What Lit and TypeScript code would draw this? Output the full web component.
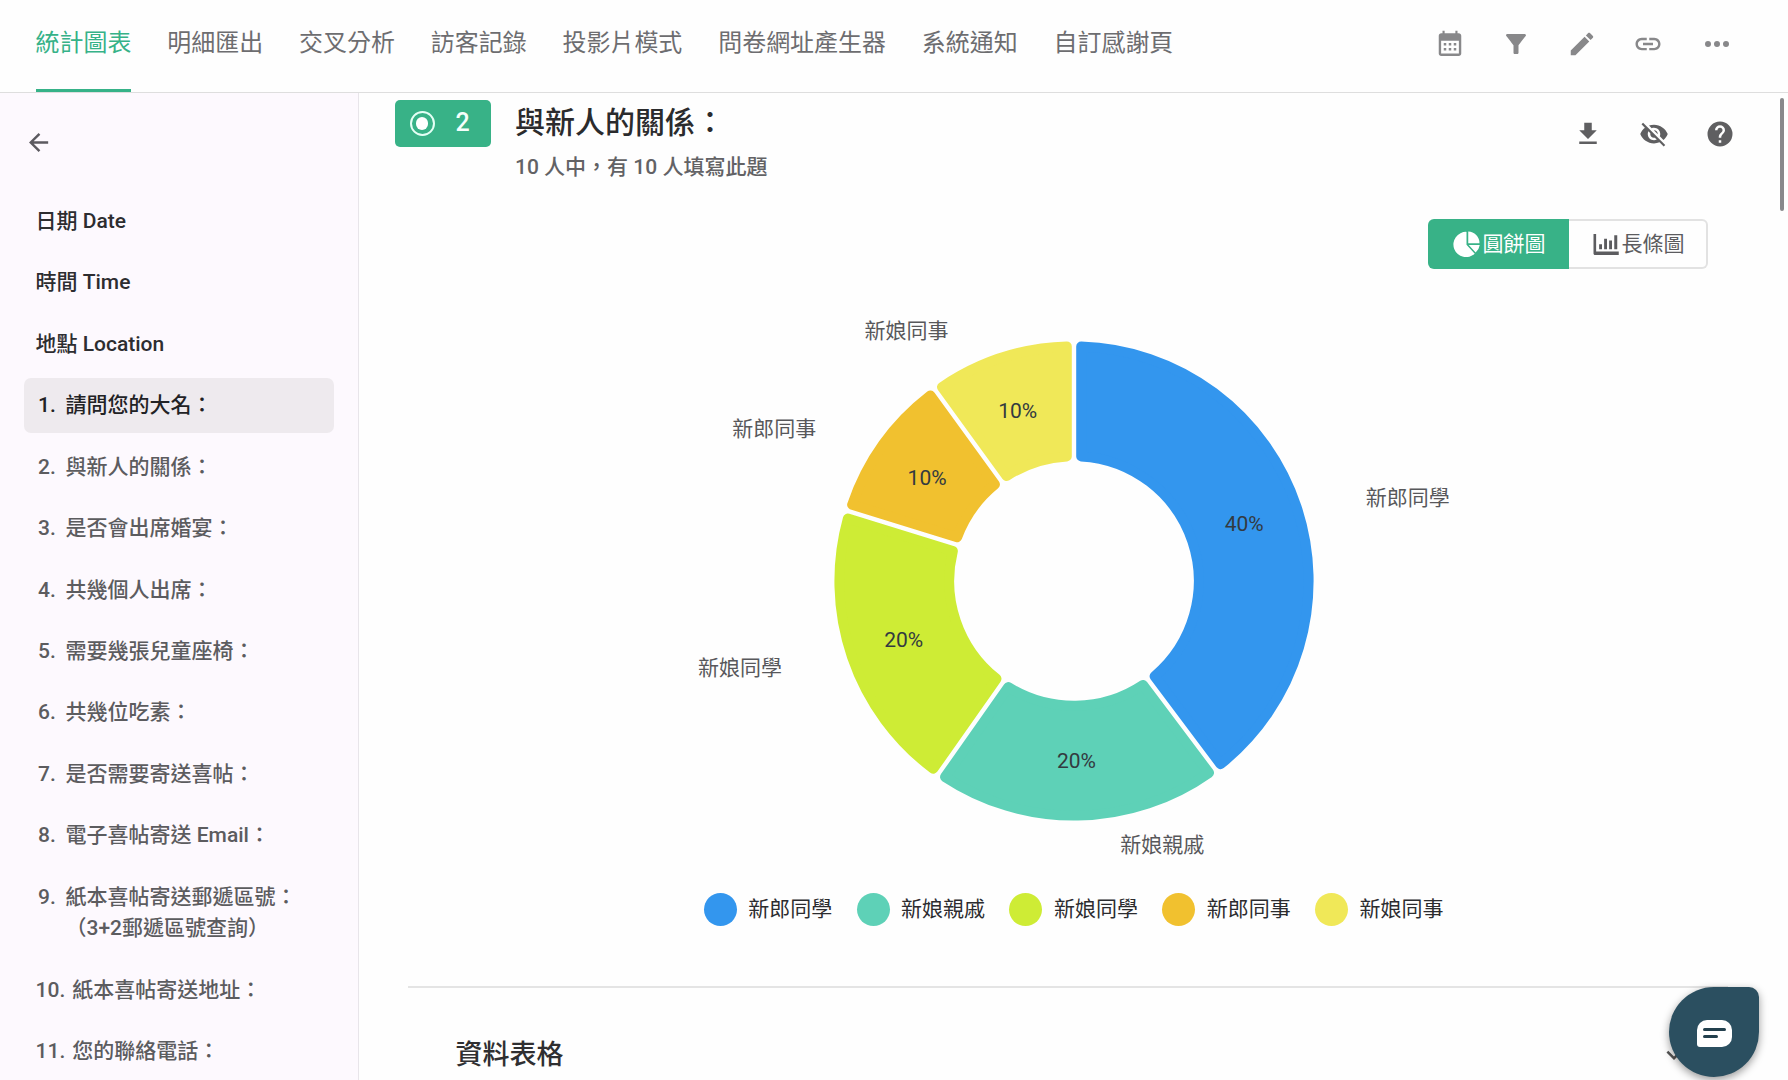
import { LitElement, html, css, svg } from "lit";
import { customElement, property } from "lit/decorators.js";
import { classMap } from "lit/directives/class-map.js";

const ICONS: Record<string, string> = {
  calendar:
    "M19 3.3h-1V1.4h-1.7v1.9H7.7V1.4H6v1.9H5c-1.1 0-2 .9-2 2v14.2c0 1.1.9 2 2 2h14c1.1 0 2-.9 2-2V5.3c0-1.1-.9-2-2-2zM19.1 19.6H4.9V9.4h14.2v10.2zM7 11.2h2v2H7zM11 11.2h2v2h-2zM15 11.2h2v2h-2zM7 15.2h2v2H7zM11 15.2h2v2h-2zM15 15.2h2v2h-2z",
  filter:
    "M4.25 5.61C6.27 8.2 10 13 10 13v6c0 .55.45 1 1 1h2c.55 0 1-.45 1-1v-6s3.72-4.8 5.74-7.39A.998.998 0 0 0 18.95 4H5.04c-.83 0-1.3.95-.79 1.61z",
  pencil:
    "M20.71 7.04c.39-.39.39-1.04 0-1.41l-2.34-2.34c-.37-.39-1.02-.39-1.41 0l-1.84 1.83 3.75 3.75M3 17.25V21h3.75L17.81 9.93l-3.75-3.75L3 17.25z",
  link:
    "M3.9 12c0-1.71 1.39-3.1 3.1-3.1h4V7H7c-2.76 0-5 2.24-5 5s2.24 5 5 5h4v-1.9H7c-1.71 0-3.1-1.39-3.1-3.1zM8 13h8v-2H8v2zm9-6h-4v1.9h4c1.71 0 3.1 1.39 3.1 3.1s-1.39 3.1-3.1 3.1h-4V17h4c2.76 0 5-2.24 5-5s-2.24-5-5-5z",
  dots:
    "M4.8 9.6a2.4 2.4 0 1 0 0 4.8 2.4 2.4 0 0 0 0-4.8zM12 9.6a2.4 2.4 0 1 0 0 4.8 2.4 2.4 0 0 0 0-4.8zM19.2 9.6a2.4 2.4 0 1 0 0 4.8 2.4 2.4 0 0 0 0-4.8z",
  back: "M20 11v2H8l5.5 5.5-1.42 1.42L4.16 12l7.92-7.92L13.5 5.5 8 11h12z",
  download: "M5 20h14v-2H5v2zM19 9h-4V3H9v6H5l7 7 7-7z",
  eyeOff:
    "M12 7c2.76 0 5 2.24 5 5 0 .65-.13 1.26-.36 1.83l2.92 2.92c1.51-1.26 2.7-2.89 3.43-4.75-1.73-4.39-6-7.5-11-7.5-1.4 0-2.74.25-3.98.7l2.16 2.16C10.74 7.13 11.35 7 12 7zM2 4.27l2.28 2.28.46.46C3.08 8.3 1.78 10.02 1 12c1.73 4.39 6 7.5 11 7.5 1.55 0 3.03-.3 4.38-.84l.42.42L19.73 22 21 20.73 3.27 3 2 4.27zM7.53 9.8l1.55 1.55c-.05.21-.08.43-.08.65 0 1.66 1.34 3 3 3 .22 0 .44-.03.65-.08l1.55 1.55c-.67.33-1.41.53-2.2.53-2.76 0-5-2.24-5-5 0-.79.2-1.53.53-2.2zm4.31-.78l3.15 3.15.02-.16c0-1.66-1.34-3-3-3l-.17.01z",
  help:
    "M15.07 11.25l-.9.92C13.45 12.89 13 13.5 13 15h-2v-.5c0-1.11.45-2.11 1.17-2.83l1.24-1.26c.37-.36.59-.86.59-1.41a2 2 0 0 0-4 0H8a4 4 0 0 1 8 0c0 .88-.36 1.67-.93 2.25M13 19h-2v-2h2M12 2a10 10 0 1 0 0 20 10 10 0 0 0 0-20z",
  chevron: "M7.41 8.58L12 13.17l4.59-4.59L18 10l-6 6-6-6 1.41-1.42z",
  pie: "M11.6 2.3V12.6l6.6 7.1A10.1 10.1 0 1 1 11.6 2.3zM13 2v9.3h9A9.4 9.4 0 0 0 13 2zM13.4 12.8H22.2a9.3 9.3 0 0 1-3.3 5.9L13.4 12.8z",
  bars:
    "M2 4h2.1v14h18.1v2.7H3.2c-.7 0-1.2-.5-1.2-1.2V4zM6.5 12.2h2.3v4H6.5zM10.5 7.7h2.3v8.5h-2.3zM14.5 9.2h2.3v7h-2.3zM18.6 5h2.4v11.2h-2.4z",
};

const TABS = ["統計圖表", "明細匯出", "交叉分析", "訪客記錄", "投影片模式", "問卷網址產生器", "系統通知", "自訂感謝頁"];

const HEADINGS = ["日期 Date", "時間 Time", "地點 Location"];

const QUESTIONS: string[][] = [
  ["請問您的大名："],
  ["與新人的關係："],
  ["是否會出席婚宴："],
  ["共幾個人出席："],
  ["需要幾張兒童座椅："],
  ["共幾位吃素："],
  ["是否需要寄送喜帖："],
  ["電子喜帖寄送 Email："],
  ["紙本喜帖寄送郵遞區號：", "（3+2郵遞區號查詢）"],
  ["紙本喜帖寄送地址："],
  ["您的聯絡電話："],
];

interface Slice {
  name: string;
  share: number;
  color: string;
  /** Angle in degrees, clockwise from the top, at which the slice ends. */
  end: number;
  /** Centre of the share text, relative to the ring's centre. */
  inner: [number, number];
  /** Centre of the name, relative to the ring's centre. */
  outer: [number, number];
}

const SLICES: Slice[] = [
  { name: "新郎同學", share: 40, end: 143.1, color: "#3396ee", inner: [170.2, -57.3], outer: [333.7, -84] },
  { name: "新娘親戚", share: 20, end: 215.1, color: "#5ed1b7", inner: [2.4, 179.3], outer: [88.3, 263.3] },
  { name: "新娘同學", share: 20, end: 287.2, color: "#ceec35", inner: [-170.3, 58.8], outer: [-334, 86] },
  { name: "新郎同事", share: 10, end: 324, color: "#f1c12f", inner: [-146.9, -103.8], outer: [-299.7, -152.9] },
  { name: "新娘同事", share: 10, end: 360, color: "#f0e858", inner: [-56.3, -170.5], outer: [-167.5, -250.7] },
];

@customElement("ui-icon")
class UiIcon extends LitElement {
  static styles = css`
    :host { display: inline-flex; width: 30px; height: 30px; flex: none; }
    svg { width: 100%; height: 100%; fill: currentColor; display: block; }
  `;
  @property() name = "";
  render() {
    return html`<svg viewBox="0 0 24 24"><path fill-rule="evenodd" d=${ICONS[this.name] ?? ""}></path></svg>`;
  }
}

@customElement("donut-chart")
class DonutChart extends LitElement {
  static styles = css`
    :host { display: block; }
    svg { display: block; width: 800px; height: 560px; }
    text { font-family: Roboto, "Noto Sans CJK TC", sans-serif; font-size: 21px; text-anchor: middle; }
    .share { fill: #333a40; }
    .name { fill: #58585b; }
    .slice { stroke-width: 10px; stroke-linejoin: round; }
  `;

  private slicePath(from: number, to: number): string {
    const corner = 5;
    const inset = corner + 2.2;
    const outer = 239.6 - corner;
    const inner = 119.8 + corner;
    const a = (from / 180) * Math.PI;
    const b = (to / 180) * Math.PI;
    const at = (r: number, angle: number) => `${(r * Math.sin(angle)).toFixed(2)} ${(-r * Math.cos(angle)).toFixed(2)}`;
    const o = Math.asin(inset / outer);
    const i = Math.asin(inset / inner);
    return `M${at(outer, a + o)}A${outer} ${outer} 0 0 1 ${at(outer, b - o)}L${at(inner, b - i)}A${inner} ${inner} 0 0 0 ${at(inner, a + i)}Z`;
  }

  render() {
    let start = 0;
    return html`<svg viewBox="-400 -280 800 560">
      ${SLICES.map((s) => {
        const d = this.slicePath(start, s.end);
        start = s.end;
        return svg`<path class="slice" d=${d} fill=${s.color} stroke=${s.color}></path>
          <text class="share" x=${s.inner[0]} y=${s.inner[1] + 7.4}>${s.share}%</text>
          <text class="name" x=${s.outer[0]} y=${s.outer[1] + 7.8}>${s.name}</text>`;
      })}
    </svg>`;
  }
}

@customElement("app-root")
class AppRoot extends LitElement {
  static styles = css`
    * { box-sizing: border-box; }
    :host {
      display: flex; flex-direction: column; position: relative;
      width: 1788px; height: 1080px; overflow: hidden; background: #fefefe;
      font-family: Roboto, "Noto Sans CJK TC", sans-serif; font-size: 21px; color: #5c5c5f;
    }
    .header {
      display: flex; justify-content: space-between; flex: none; height: 93px;
      border-bottom: 1.5px solid #dedede; padding: 0 56px 0 35.6px;
    }
    .tabs { display: flex; gap: 36px; }
    .tab {
      font-size: 23.95px; line-height: 36px; padding-top: 25px; height: 91.5px;
      color: #6d6d70; border-bottom: 3.5px solid transparent; white-space: nowrap;
    }
    .tab.active { color: #36b288; border-bottom-color: #36b288; }
    .actions { display: flex; gap: 36px; padding-top: 29px; color: #88888a; }
    .actions ui-icon:last-child { margin-left: 3px; }
    .body { display: flex; flex: 1; min-height: 0; }
    .sidebar {
      width: 359px; flex: none; background: #fdf9fe; border-right: 1.5px solid #e8e5ea;
      padding: 35px 24px 0; overflow: hidden;
    }
    .back { display: flex; color: #5c5a60; }
    .back ui-icon { width: 29px; height: 29px; }
    .list { display: flex; flex-direction: column; gap: 6.3px; margin-top: 36.5px; font-weight: 500; line-height: 31.5px; }
    .item { display: flex; gap: 7px; padding: 12.4px 11.5px 11.25px; border-radius: 7px; white-space: nowrap; width: 310px; }
    .item.heading { color: #2d2d30; }
    .item.active { background: #eeeaee; color: #222225; }
    .number { min-width: 23px; text-align: center; }
    .main { flex: 1; position: relative; padding: 7px 0 0 36px; min-width: 0; }
    .question { display: flex; height: 92px; }
    .badge {
      width: 96px; height: 47px; border-radius: 5px; background: #38b287; color: #f4fffb;
      display: flex; align-items: center; gap: 21px; padding-left: 14.5px; font-size: 25px; font-weight: 500; flex: none;
      line-height: 44px;
    }
    .radio { width: 25px; height: 25px; border: 2px solid #e4fff5; border-radius: 50%; display: grid; place-items: center; }
    .radio-dot { width: 12.5px; height: 12.5px; border-radius: 50%; background: #fff; }
    .badge-number { margin-top: -2px; }
    .heading-text { margin-left: 24px; flex: 1; }
    .title { font-size: 30px; line-height: 44px; color: #2b2b2d; font-weight: 500; padding-top: 1px; }
    .subtitle { line-height: 32px; margin-top: 6px; font-weight: 500; color: #626265; }
    .tools { display: flex; gap: 36px; padding: 18.6px 53px 0 0; color: #5f5f61; }
    .switch { display: flex; width: 280px; height: 49.5px; margin: 27px 80px 0 auto; }
    .option {
      flex: 1; display: flex; align-items: center; justify-content: center; gap: 1px;
      border: 2px solid #e2e2e2; border-left: 0; border-radius: 0 6px 6px 0;
    }
    .option-text { padding-bottom: 4px; }
    .option.on { flex: 0 0 141px; background: #38b287; color: #fff; border: 0; border-radius: 6px 0 0 6px; }
    .chart { width: 800px; margin: 32px 0 0 279.3px; }
    .legend { display: flex; gap: 24.3px; margin: 32px 0 0 308.8px; color: #2c2c2f; line-height: 33px; }
    .entry { display: flex; align-items: center; gap: 11.5px; height: 33px; white-space: nowrap; }
    .swatch { width: 33px; height: 33px; border-radius: 50%; flex: none; }
    .table-head {
      display: flex; justify-content: space-between; margin: 60px 60px 0 12.5px; padding: 47.5px 39px 0 48px;
      border-top: 2px solid #e4e4e4; font-size: 27px; line-height: 40px; color: #2f2f31; font-weight: 500;
    }
    .table-head ui-icon { margin-top: 4.5px; color: #555; }
    .scroll { position: absolute; right: 4px; top: 5px; width: 4px; height: 113px; border-radius: 2px; background: #88888b; }
    .chat {
      position: absolute; left: 1669px; top: 987.3px; width: 90px; height: 90px; border-radius: 50% 10px 50% 50%;
      background: #2b4f60; box-shadow: 0 3px 8px rgba(0, 0, 0, 0.4); display: grid; place-items: center;
    }
    .bubble {
      width: 35px; height: 27px; background: #fff; border-radius: 10px 10px 10px 3px; margin-top: 3px; margin-left: 1px;
      display: flex; flex-direction: column; gap: 4.5px; padding: 7.5px 0 0 6px;
    }
    .line { width: 23px; height: 3px; border-radius: 2px; background: #23404e; }
    .line.short { width: 15px; }
  `;

  render() {
    return html`
      <header class="header">
        <nav class="tabs">
          ${TABS.map((t, i) => html`<div class=${classMap({ tab: true, active: i === 0 })}>${t}</div>`)}
        </nav>
        <div class="actions">
          ${["calendar", "filter", "pencil", "link", "dots"].map((n) => html`<ui-icon name=${n}></ui-icon>`)}
        </div>
      </header>
      <div class="body">
        <aside class="sidebar">
          <div class="back"><ui-icon name="back"></ui-icon></div>
          <div class="list">
            ${HEADINGS.map((h) => html`<div class="item heading">${h}</div>`)}
            ${QUESTIONS.map(
              (lines, i) => html`<div class=${classMap({ item: true, active: i === 0 })}>
                <span class="number">${i + 1}.</span>
                <div>${lines.map((l) => html`<div>${l}</div>`)}</div>
              </div>`
            )}
          </div>
        </aside>
        <main class="main">
          <section class="question">
            <div class="badge">
              <span class="radio"><span class="radio-dot"></span></span><span class="badge-number">2</span>
            </div>
            <div class="heading-text">
              <div class="title">與新人的關係：</div>
              <div class="subtitle">10 人中，有 10 人填寫此題</div>
            </div>
            <div class="tools">
              <ui-icon name="download"></ui-icon><ui-icon name="eyeOff"></ui-icon><ui-icon name="help"></ui-icon>
            </div>
          </section>
          <div class="switch">
            <div class="option on"><ui-icon name="pie"></ui-icon><span class="option-text">圓餅圖</span></div>
            <div class="option"><ui-icon name="bars"></ui-icon><span class="option-text">長條圖</span></div>
          </div>
          <donut-chart class="chart"></donut-chart>
          <div class="legend">
            ${SLICES.map((s) => html`<div class="entry"><span class="swatch" style="background:${s.color}"></span>${s.name}</div>`)}
          </div>
          <div class="table-head"><span>資料表格</span><ui-icon name="chevron"></ui-icon></div>
          <div class="scroll"></div>
        </main>
      </div>
      <div class="chat"><div class="bubble"><div class="line"></div><div class="line short"></div></div></div>
    `;
  }
}
